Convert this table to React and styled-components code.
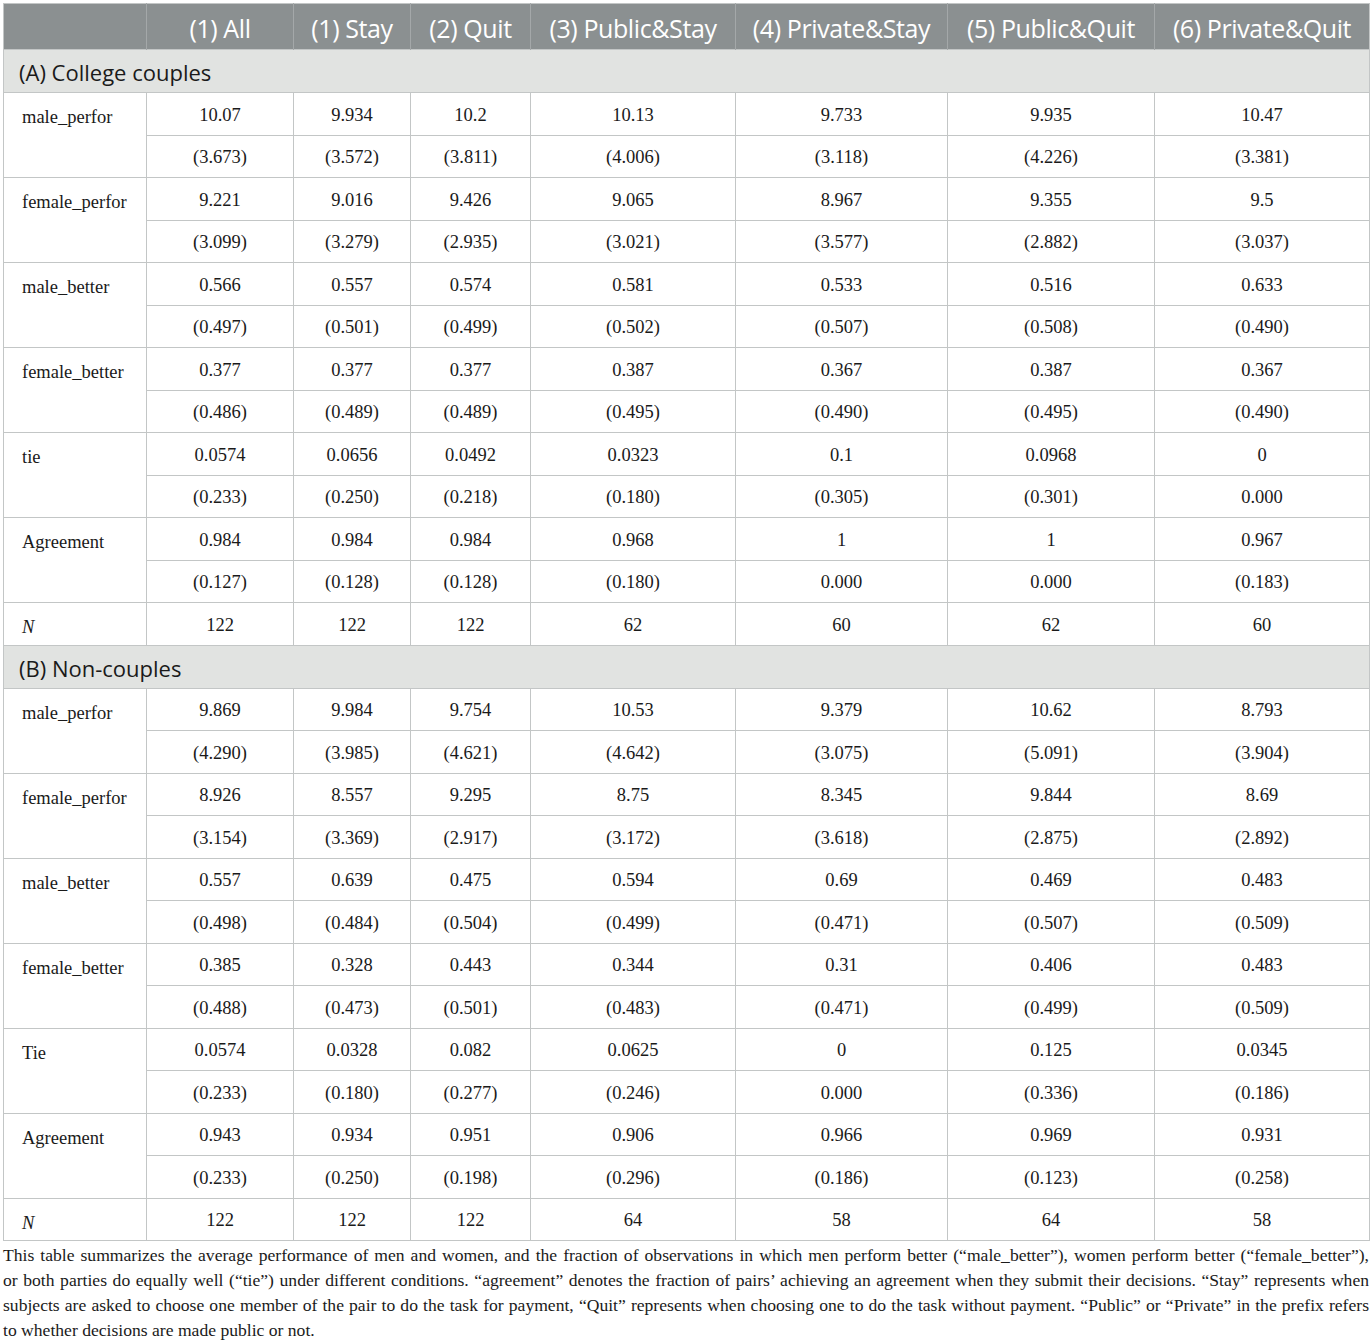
import React from "react";
import styled, { createGlobalStyle } from "styled-components";

const Global = createGlobalStyle`
  html, body { margin: 0; padding: 0; background: #ffffff; }
  body { padding: 3px 3px 0 3px; }
`;

const Table = styled.table`
  border-collapse: collapse;
  width: 1366px;
  table-layout: fixed;
  border: 1px solid #c3c6c6;
`;

const HeadCell = styled.th`
  background: #8b9091;
  color: #ffffff;
  font-family: "Open Sans", "Noto Sans", sans-serif;
  font-weight: 400;
  font-size: 25px;
  letter-spacing: -0.4px;
  height: 43px;
  padding: 2px 4px 0 4px;
  text-align: center;
  white-space: nowrap;
  border-left: 1px solid #a4a8a9;
  &:first-child { border-left: none; }
`;

const SectionCell = styled.td`
  background: #e1e3e1;
  color: #1a1a1a;
  font-family: "Open Sans", "Noto Sans", sans-serif;
  font-size: 22px;
  height: 40px;
  padding: 2px 0 0 15px;
  border-top: 1px solid #c3c6c6;
  border-bottom: 1px solid #c3c6c6;
`;

const LabelCell = styled.td`
  font-family: "Liberation Serif", "Times New Roman", serif;
  font-size: 18.5px;
  color: #1a1a1a;
  vertical-align: top;
  padding: 14px 0 0 18px;
  font-style: ${(p) => (p.$italic ? "italic" : "normal")};
  border: 1px solid #c3c6c6;
`;

const ValueCell = styled.td`
  font-family: "Liberation Serif", "Times New Roman", serif;
  font-size: 18.5px;
  color: #1a1a1a;
  text-align: center;
  height: 38.5px;
  padding: 3px 0 0 0;
  border: 1px solid #c3c6c6;
`;

const Footnote = styled.div`
  width: 1366px;
  font-family: "Liberation Serif", "Times New Roman", serif;
  font-size: 17.6px;
  line-height: 25px;
  color: #1a1a1a;
  padding-top: 2px;
`;

const Line = styled.div`
  text-align: justify;
  text-align-last: ${(p) => (p.$last ? "left" : "justify")};
  white-space: nowrap;
`;

const headers = [
  "",
  "(1) All",
  "(1) Stay",
  "(2) Quit",
  "(3) Public&Stay",
  "(4) Private&Stay",
  "(5) Public&Quit",
  "(6) Private&Quit",
];

const widths = [143, 147, 117, 120, 205, 212, 207, 215];

const sections = [
  {
    title: "(A) College couples",
    rows: [
      ["male_perfor", ["10.07", "9.934", "10.2", "10.13", "9.733", "9.935", "10.47"], ["(3.673)", "(3.572)", "(3.811)", "(4.006)", "(3.118)", "(4.226)", "(3.381)"]],
      ["female_perfor", ["9.221", "9.016", "9.426", "9.065", "8.967", "9.355", "9.5"], ["(3.099)", "(3.279)", "(2.935)", "(3.021)", "(3.577)", "(2.882)", "(3.037)"]],
      ["male_better", ["0.566", "0.557", "0.574", "0.581", "0.533", "0.516", "0.633"], ["(0.497)", "(0.501)", "(0.499)", "(0.502)", "(0.507)", "(0.508)", "(0.490)"]],
      ["female_better", ["0.377", "0.377", "0.377", "0.387", "0.367", "0.387", "0.367"], ["(0.486)", "(0.489)", "(0.489)", "(0.495)", "(0.490)", "(0.495)", "(0.490)"]],
      ["tie", ["0.0574", "0.0656", "0.0492", "0.0323", "0.1", "0.0968", "0"], ["(0.233)", "(0.250)", "(0.218)", "(0.180)", "(0.305)", "(0.301)", "0.000"]],
      ["Agreement", ["0.984", "0.984", "0.984", "0.968", "1", "1", "0.967"], ["(0.127)", "(0.128)", "(0.128)", "(0.180)", "0.000", "0.000", "(0.183)"]],
    ],
    n: ["122", "122", "122", "62", "60", "62", "60"],
  },
  {
    title: "(B) Non-couples",
    rows: [
      ["male_perfor", ["9.869", "9.984", "9.754", "10.53", "9.379", "10.62", "8.793"], ["(4.290)", "(3.985)", "(4.621)", "(4.642)", "(3.075)", "(5.091)", "(3.904)"]],
      ["female_perfor", ["8.926", "8.557", "9.295", "8.75", "8.345", "9.844", "8.69"], ["(3.154)", "(3.369)", "(2.917)", "(3.172)", "(3.618)", "(2.875)", "(2.892)"]],
      ["male_better", ["0.557", "0.639", "0.475", "0.594", "0.69", "0.469", "0.483"], ["(0.498)", "(0.484)", "(0.504)", "(0.499)", "(0.471)", "(0.507)", "(0.509)"]],
      ["female_better", ["0.385", "0.328", "0.443", "0.344", "0.31", "0.406", "0.483"], ["(0.488)", "(0.473)", "(0.501)", "(0.483)", "(0.471)", "(0.499)", "(0.509)"]],
      ["Tie", ["0.0574", "0.0328", "0.082", "0.0625", "0", "0.125", "0.0345"], ["(0.233)", "(0.180)", "(0.277)", "(0.246)", "0.000", "(0.336)", "(0.186)"]],
      ["Agreement", ["0.943", "0.934", "0.951", "0.906", "0.966", "0.969", "0.931"], ["(0.233)", "(0.250)", "(0.198)", "(0.296)", "(0.186)", "(0.123)", "(0.258)"]],
    ],
    n: ["122", "122", "122", "64", "58", "64", "58"],
  },
];

const noteLines = [
  "This table summarizes the average performance of men and women, and the fraction of observations in which men perform better (\u201Cmale_better\u201D), women perform better (\u201Cfemale_better\u201D),",
  "or both parties do equally well (\u201Ctie\u201D) under different conditions. \u201Cagreement\u201D denotes the fraction of pairs\u2019 achieving an agreement when they submit their decisions. \u201CStay\u201D represents when",
  "subjects are asked to choose one member of the pair to do the task for payment, \u201CQuit\u201D represents when choosing one to do the task without payment. \u201CPublic\u201D or \u201CPrivate\u201D in the prefix refers",
  "to whether decisions are made public or not.",
];

export default function App() {
  return (
    <>
      <Global />
      <Table>
        <colgroup>
          {widths.map((w, i) => (
            <col key={i} style={{ width: w }} />
          ))}
        </colgroup>
        <thead>
          <tr>
            {headers.map((h, i) => (
              <HeadCell key={i}>{h}</HeadCell>
            ))}
          </tr>
        </thead>
        <tbody>
          {sections.map((s) => (
            <React.Fragment key={s.title}>
              <tr>
                <SectionCell colSpan={8}>{s.title}</SectionCell>
              </tr>
              {s.rows.map(([label, vals, ses]) => (
                <React.Fragment key={label}>
                  <tr>
                    <LabelCell rowSpan={2}>{label}</LabelCell>
                    {vals.map((v, i) => (
                      <ValueCell key={i}>{v}</ValueCell>
                    ))}
                  </tr>
                  <tr>
                    {ses.map((v, i) => (
                      <ValueCell key={i}>{v}</ValueCell>
                    ))}
                  </tr>
                </React.Fragment>
              ))}
              <tr>
                <LabelCell $italic>N</LabelCell>
                {s.n.map((v, i) => (
                  <ValueCell key={i}>{v}</ValueCell>
                ))}
              </tr>
            </React.Fragment>
          ))}
        </tbody>
      </Table>
      <Footnote>
        {noteLines.map((l, i) => (
          <Line key={i} $last={i === noteLines.length - 1}>
            {l}
          </Line>
        ))}
      </Footnote>
    </>
  );
}
